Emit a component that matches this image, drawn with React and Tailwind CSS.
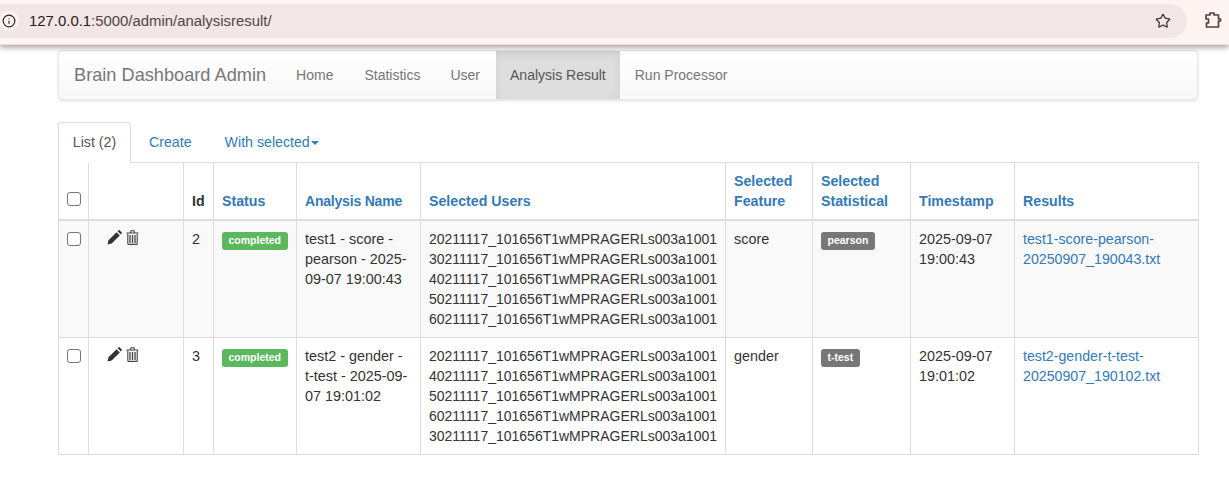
import React from 'react';
import { Info, Star } from 'lucide-react';

const users1 = ['20211117_101656T1wMPRAGERLs003a1001', '30211117_101656T1wMPRAGERLs003a1001', '40211117_101656T1wMPRAGERLs003a1001', '50211117_101656T1wMPRAGERLs003a1001', '60211117_101656T1wMPRAGERLs003a1001'];
const users2 = ['20211117_101656T1wMPRAGERLs003a1001', '40211117_101656T1wMPRAGERLs003a1001', '50211117_101656T1wMPRAGERLs003a1001', '60211117_101656T1wMPRAGERLs003a1001', '30211117_101656T1wMPRAGERLs003a1001'];

const rows = [
  { id: 2, name: 'test1 - score - pearson - 2025-09-07 19:00:43', users: users1, feature: 'score', stat: 'pearson', time: '2025-09-07 19:00:43', file: 'test1-score-pearson-20250907_190043.txt', shade: 'bg-[#f9f9f9]' },
  { id: 3, name: 'test2 - gender - t-test - 2025-09-07 19:01:02', users: users2, feature: 'gender', stat: 't-test', time: '2025-09-07 19:01:02', file: 'test2-gender-t-test-20250907_190102.txt', shade: 'bg-white' },
];

const Pencil = () => (
  <svg width="15" height="15" viewBox="0 0 15 15" className="text-[#333]">
    <path fill="currentColor" d="M0.5 14.5 L1.5 10.3 L9.6 2.2 L12.8 5.4 L4.7 13.5 Z M10.6 1.2 L11.5 0.4 C11.9 0 12.4 0 12.8 0.4 L14.6 2.2 C15 2.6 15 3.1 14.6 3.5 L13.8 4.4 Z" />
  </svg>
);

const Trash = () => (
  <svg width="13" height="15" viewBox="0 0 13 15" className="text-[#444]" fill="none" stroke="currentColor">
    <path strokeWidth="1.1" d="M0.5 3 H12.5 M4.5 2.8 L5 0.8 H8 L8.5 2.8" />
    <path strokeWidth="1.1" d="M1.8 3.5 V13.4 C1.8 14 2.1 14.4 2.7 14.4 H10.3 C10.9 14.4 11.2 14 11.2 13.4 V3.5" />
    <path strokeWidth="1.3" d="M4 5 V13 M6.5 5 V13 M9 5 V13" />
  </svg>
);

const Extension = () => (
  <svg width="18" height="18" viewBox="0 0 18 18" fill="none" stroke="#5b3f3c" strokeWidth="1.7" strokeLinejoin="round">
    <path d="M2 4 H6 V2 H10 V4 H14.5 V8 H16.5 V10 H14.5 V16 H2.5 V12 H4.5 V8 H2 Z" />
  </svg>
);

const Check = () => <span className="block w-[14px] h-[14px] rounded-[3px] border border-[#767676] bg-white" />;

const Th = ({ children, link = true, size = 'text-[14.2px]' }) => (
  <th className={`border border-[#ddd] border-b-2 px-2 py-2 align-bottom text-left font-bold ${size}`}>
    {link ? <span className="text-[#337ab7]">{children}</span> : children}
  </th>
);

const Td = ({ children, className = '' }) => (
  <td className={`border border-[#ddd] p-2 align-top ${className}`}>{children}</td>
);

const Label = ({ color, children }) => (
  <span className={`block w-fit mt-[3px] ${color} text-white text-[10.5px] font-bold leading-none px-[6.5px] pt-[3px] pb-[4px] rounded-[3px]`}>{children}</span>
);

export default function App() {
  return (
    <div className="h-[487px] overflow-hidden bg-white text-[#333] text-[14.4px] leading-[20px]" style={{ fontFamily: '"Liberation Sans", Arial, sans-serif' }}>
      <div className="relative z-10 h-[45px] bg-[#fef4f1] border-b border-[#f5ddd5] shadow-[0_3px_5px_rgba(0,0,0,0.32)] flex items-center pr-[7px]">
        <div className="flex-1 h-[34px] -mt-[3px] bg-[#f3e6e6] rounded-r-full flex items-center pr-[16px]">
          <span className="w-[20px] h-[20px] rounded-full bg-[#fdf4f2] flex items-center justify-center text-[#2e2222] -ml-px"><Info size={14} strokeWidth={2} /></span>
          <span className="ml-[10px] text-[14.9px] text-[#554545]"><span className="text-[#2b2020]">127.0.0.1</span>:5000/admin/analysisresult/</span>
          <span className="ml-auto text-[#4c3a3a]"><Star size={16} strokeWidth={2} /></span>
        </div>
        <span className="ml-[17px] -mt-[5px]"><Extension /></span>
      </div>

      <div className="pl-[58px] pr-[31px] pt-[5px]">
        <nav className="w-[1140px] h-[50px] flex items-stretch border border-[#e7e7e7] rounded-[4px] bg-gradient-to-b from-white to-[#f8f8f8] shadow-[0_1px_3px_rgba(0,0,0,0.12)] text-[#777] text-[14px]">
          <span className="self-center ml-[15px] mr-[15px] text-[18.2px]">Brain Dashboard Admin</span>
          <span className="self-center px-[15px]">Home</span>
          <span className="self-center px-[15px] ml-px">Statistics</span>
          <span className="self-center px-[15px]">User</span>
          <span className="flex items-center px-[14px] ml-px bg-[#dedede] text-[#555] shadow-[inset_0_3px_8px_rgba(0,0,0,0.08)]">Analysis Result</span>
          <span className="self-center px-[15px]">Run Processor</span>
        </nav>

        <div className="mt-[22px] h-[41px] flex items-stretch text-[14.2px] pb-[2px]">
          <div className="w-[73px] h-[41px] -mb-[2px] pb-[2px] flex items-center justify-center border border-[#ddd] border-b-white rounded-t-[4px] text-[#555] bg-white relative z-10">List (2)</div>
          <span className="flex items-center px-[15px] ml-[3px] text-[#337ab7]">Create</span>
          <span className="flex items-center px-[15px] ml-[3px] text-[#337ab7]">With selected<span className="ml-[1px] mt-[2px] border-x-[4px] border-x-transparent border-t-[4px] border-t-[#337ab7]" /></span>
        </div>

        <table className="-mt-px w-[1140px] table-fixed border-collapse">
          <colgroup>
            <col className="w-[30px]" /><col className="w-[95px]" /><col className="w-[30px]" /><col className="w-[83px]" /><col className="w-[124px]" /><col className="w-[305px]" /><col className="w-[87px]" /><col className="w-[98px]" /><col className="w-[104px]" /><col className="w-[184px]" />
          </colgroup>
          <thead>
            <tr className="h-[57px]">
              <th className="border border-[#ddd] border-b-2 px-2 pt-[29px] align-top"><Check /></th>
              <Th link={false}>{''}</Th>
              <Th link={false}>Id</Th>
              <Th>Status</Th>
              <Th size="text-[14px] tracking-[-0.2px]">Analysis Name</Th>
              <Th>Selected Users</Th>
              <Th>Selected Feature</Th>
              <Th>Selected Statistical</Th>
              <Th>Timestamp</Th>
              <Th>Results</Th>
            </tr>
          </thead>
          <tbody>
            {rows.map((r) => (
              <tr key={r.id} className={r.shade}>
                <Td><div className="mt-[3px]"><Check /></div></Td>
                <Td><div className="flex gap-[4px] pl-[10px] pt-[1px]"><Pencil /><Trash /></div></Td>
                <Td>{r.id}</Td>
                <Td><Label color="bg-[#5cb85c]">completed</Label></Td>
                <Td>{r.name}</Td>
                <Td className="text-[14px]">{r.users.map((u) => <div key={u}>{u}</div>)}</Td>
                <Td>{r.feature}</Td>
                <Td><Label color="bg-[#777]">{r.stat}</Label></Td>
                <Td>{r.time}</Td>
                <Td className="text-[14.2px]"><span className="text-[#337ab7]">{r.file}</span></Td>
              </tr>
            ))}
          </tbody>
        </table>
      </div>
    </div>
  );
}
